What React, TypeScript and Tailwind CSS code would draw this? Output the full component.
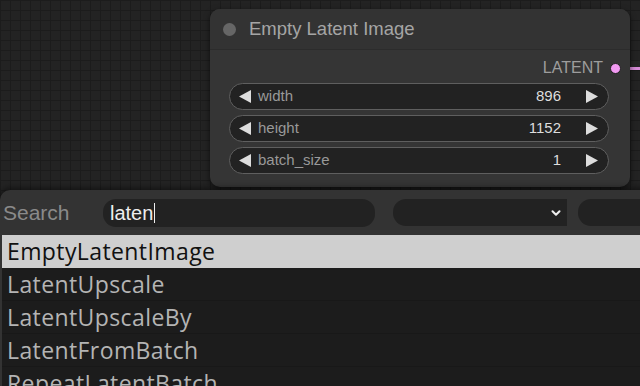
import { ChevronDown } from 'lucide-react';

const WIDGETS = [
  { label: 'width', value: '896' },
  { label: 'height', value: '1152' },
  { label: 'batch_size', value: '1' },
] as const;

const RESULTS = [
  'EmptyLatentImage',
  'LatentUpscale',
  'LatentUpscaleBy',
  'LatentFromBatch',
  'RepeatLatentBatch',
] as const;

function Arrow({ dir }: { dir: 'left' | 'right' }) {
  return (
    <svg width="13" height="13" viewBox="0 0 13 13" className="shrink-0">
      {dir === 'left' ? (
        <polygon points="12,0 12,13 0,6.5" fill="#dddddd" />
      ) : (
        <polygon points="1,0 1,13 13,6.5" fill="#dddddd" />
      )}
    </svg>
  );
}

function NumberWidget({ label, value }: { label: string; value: string }) {
  return (
    <div className="flex h-[27px] items-center rounded-full border border-[#5f5f5f] bg-[#222] pl-[9px] pr-[10px] text-[15px]">
      <Arrow dir="left" />
      <span className="ml-[6px] flex-1 text-[#999]">{label}</span>
      <span className="mr-[24px] text-[#ddd]">{value}</span>
      <Arrow dir="right" />
    </div>
  );
}

/** Empty Latent Image 노드 + 검색 팝업 */
export default function App() {
  return (
    <div
      className="relative h-[386px] w-[640px] overflow-hidden bg-[#232323] bg-[linear-gradient(to_right,#1c1c1c_1px,transparent_1px),linear-gradient(to_bottom,#1c1c1c_1px,transparent_1px)] bg-[size:10px_10px]"
      style={{ fontFamily: '"Liberation Sans", Arial, sans-serif' }}
    >
      {/* link going out of the LATENT slot */}
      <div className="absolute left-[628px] top-[67px] h-[3px] w-[20px] bg-[#d68ad6]" />

      {/* node */}
      <div className="absolute left-[210px] top-[9px] w-[420px] rounded-[10px] bg-[#353535] shadow-[0_2px_6px_rgba(0,0,0,0.6)]">
        <div className="flex h-[41px] items-center gap-[13px] rounded-t-[10px] border-b border-[#2c2c2c] bg-[#333] pl-[13px]">
          <span className="h-[13px] w-[13px] rounded-full bg-[#666]" />
          <span className="text-[18.5px] text-[#a5a5a5]">Empty Latent Image</span>
        </div>
        <div className="flex items-center justify-end gap-[7px] pr-[9px] pt-[9px] text-[16px] leading-[18px] text-[#9d9d9d]">
          <span>LATENT</span>
          <span className="h-[11px] w-[11px] rounded-full border border-[#222] bg-[#f29af2]" />
        </div>
        <div className="flex flex-col gap-[5px] pb-[13px] pl-[19px] pr-[21px] pt-[6px]">
          {WIDGETS.map((w) => (
            <NumberWidget key={w.label} label={w.label} value={w.value} />
          ))}
        </div>
      </div>

      {/* search dialog */}
      <div className="absolute left-0 top-[190px] w-[660px] rounded-tl-[10px] bg-[#333] pl-[2px] shadow-[0_-2px_6px_rgba(0,0,0,0.5)]">
        <div className="flex h-[45px] items-center">
          <span className="w-[101px] shrink-0 pl-[1px] text-[21px] text-[#8a8a8a]">Search</span>
          <div className="flex h-[28px] w-[272px] shrink-0 items-center rounded-[13px] bg-[#222] pl-[7px] text-[20px] text-[#eee]">
            laten
            <span className="ml-[1px] h-[20px] w-px bg-[#eee]" />
          </div>
          <div className="ml-[18px] flex h-[27px] w-[174px] shrink-0 items-center justify-end rounded-l-[13px] bg-[#222] pr-[4px]">
            <ChevronDown className="h-[14px] w-[14px] text-[#eee]" strokeWidth={3.5} />
          </div>
          <div className="ml-[11px] h-[27px] w-[90px] shrink-0 rounded-[13px] bg-[#222]" />
        </div>
        <div className="bg-[#1c1c1c]" style={{ fontFamily: '"Open Sans", "Noto Sans", sans-serif' }}>
          {RESULTS.map((name, i) => (
            <div
              key={name}
              className={
                i === 0
                  ? 'flex h-[33px] items-center bg-[#cfcfcf] pl-[5px] text-[23px] tracking-[0.4px] text-[#111]'
                  : 'flex h-[33px] items-center border-b border-[#181818] pl-[5px] text-[23px] tracking-[0.4px] text-[#b4b4b4]'
              }
            >
              {name}
            </div>
          ))}
        </div>
      </div>
    </div>
  );
}
